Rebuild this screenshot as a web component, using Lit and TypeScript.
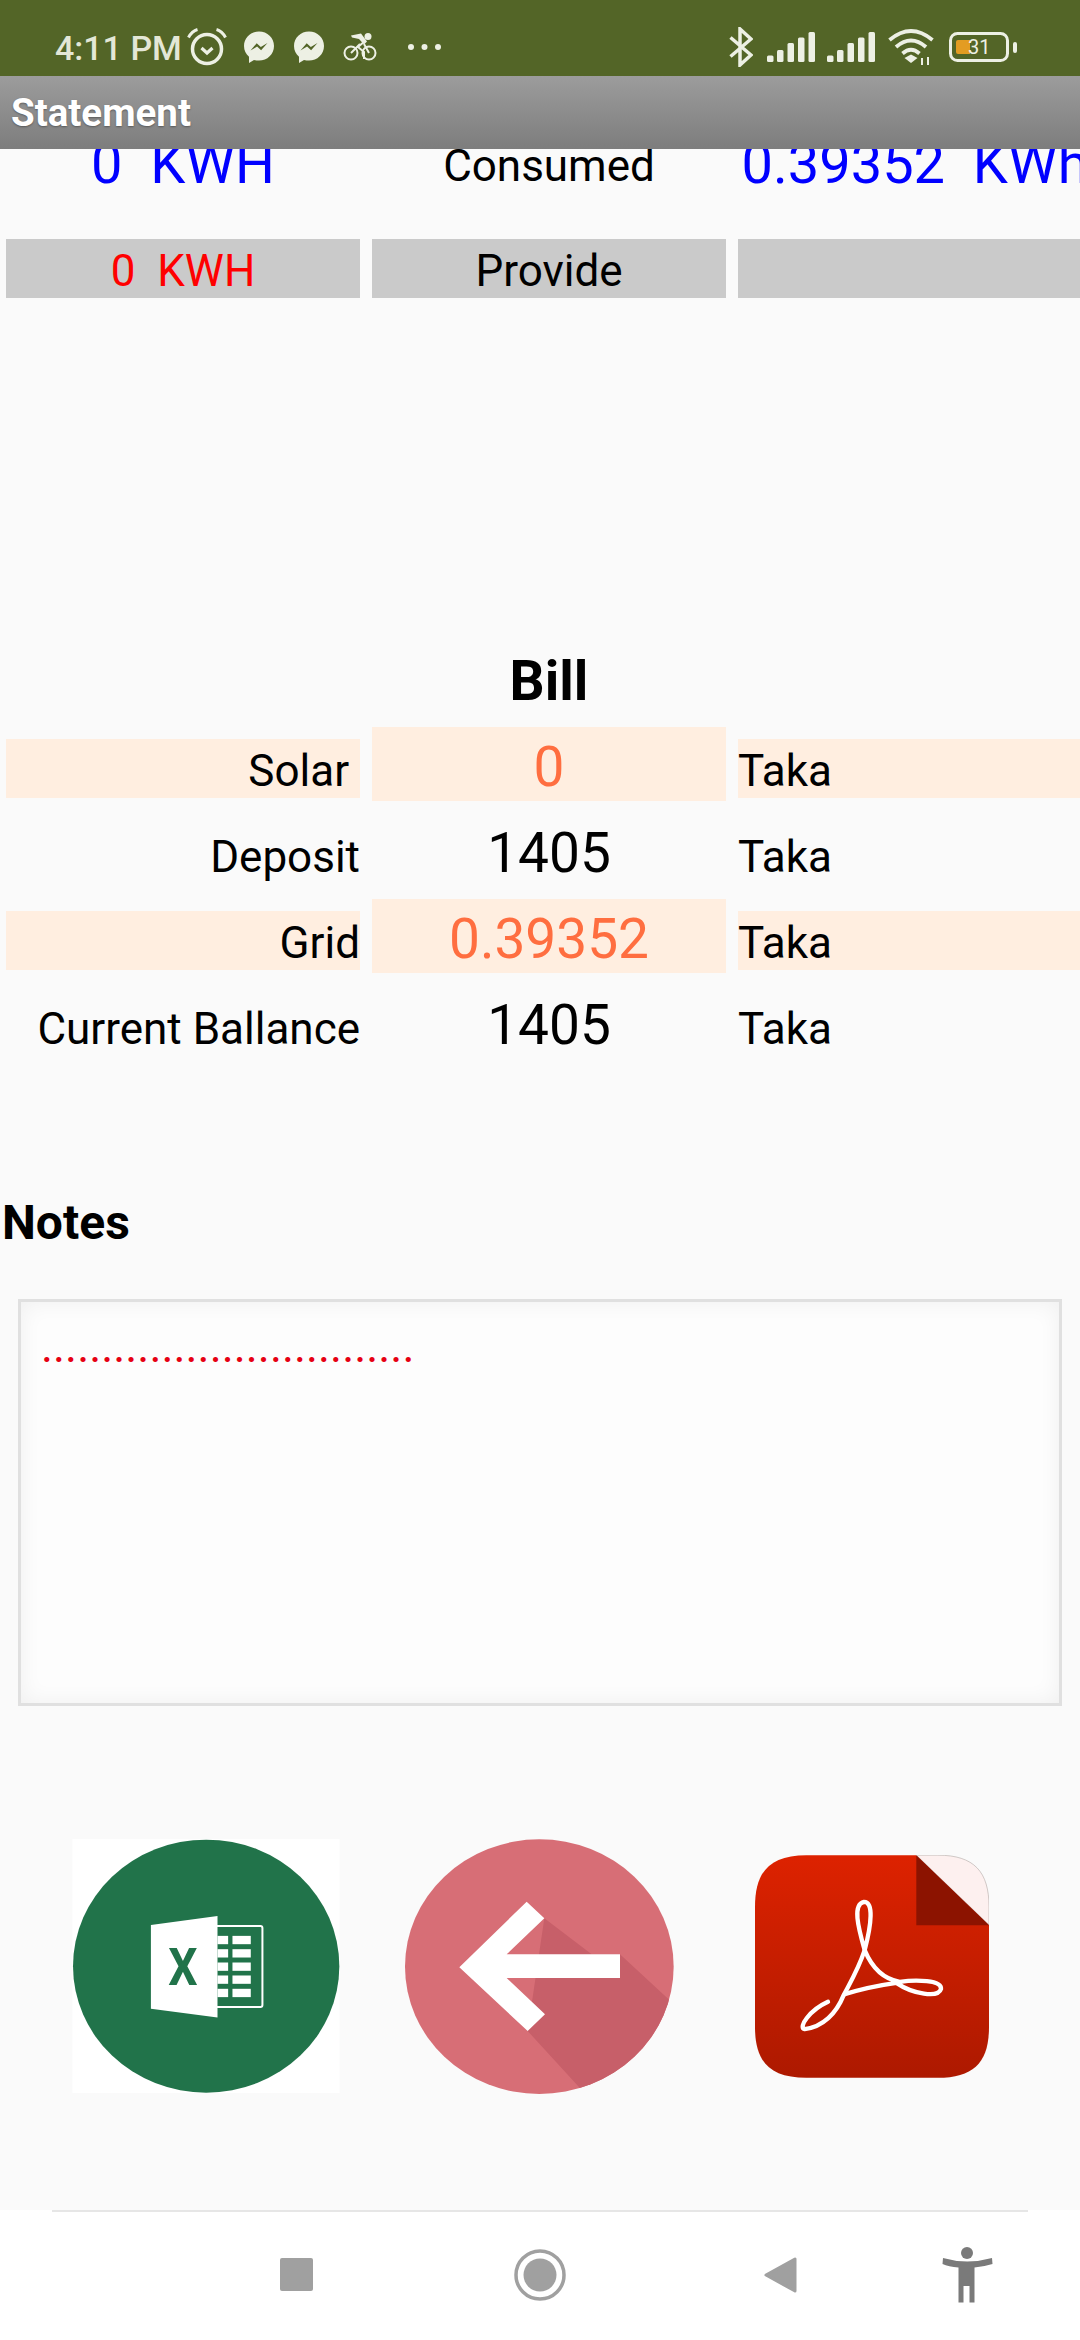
import { LitElement, css, html, svg } from "lit";
import { customElement } from "lit/decorators.js";

const signal = html`<svg class="signal" width="48" height="30" viewBox="0 0 48 30">
  <rect x="0" y="23.500" width="6.500" height="6.500" rx="1.500" />
  <rect x="10" y="18" width="6.500" height="12" rx="1.500" />
  <rect x="20.500" y="11" width="6.500" height="19" rx="1.500" />
  <rect x="31" y="5.500" width="6.500" height="24.500" rx="1.500" />
  <rect x="41.500" y="0" width="6.500" height="30" rx="1.500" />
</svg>`;

const messenger = html`<svg class="msg" width="32" height="32" viewBox="0 0 32 32">
  <path
    d="M16 .5C7.600.5 1 6.800 1 15c0 4.400 1.900 8.100 5 10.700V32l5-3.100c1.600.5 3.300.7 5 .7 8.400 0 15-6.400 15-14.600S24.400.5 16 .5z"
  />
  <path class="zig" d="M7.500 19.500l6.200-7.200 4.100 3.700 6.700-3.900-6.400 7.200-4-3.700z" />
</svg>`;

@customElement("app-root")
export class AppRoot extends LitElement {
  static styles = css`
    :host {
      display: flex;
      flex-direction: column;
      width: 1080px;
      height: 2340px;
      overflow: hidden;
      background: #fafafa;
      font-family: Roboto, "Liberation Sans", sans-serif;
      color: #000;
    }

    .status {
      flex: none;
      height: 76px;
      box-sizing: border-box;
      padding: 18px 0 0 55px;
      background: #536527;
      display: flex;
      align-items: center;
      color: #edf0e4;
    }
    .status svg {
      flex: none;
    }
    .dots,
    .signal,
    .msg {
      fill: #edf0e4;
    }
    .time {
      font-size: 34px;
      line-height: 42px;
      padding-top: 2px;
      font-weight: 500;
      width: 132px;
      white-space: nowrap;
      color: #e3e7d6;
    }
    .msg .zig {
      fill: #536527;
    }
    .alarm {
      margin-right: 16px;
    }
    .msg {
      margin-right: 18px;
    }
    .dots {
      margin-left: 30px;
    }
    .bt {
      margin-left: 288px;
    }
    .signal {
      margin-left: 14px;
    }
    .signal + .signal {
      margin-left: 12px;
    }
    .wifi {
      margin-left: 13px;
    }
    .batt {
      margin-left: 15px;
    }
    .batt text {
      font-family: Roboto, sans-serif;
      font-size: 20px;
    }

    .appbar {
      flex: none;
      height: 73px;
      background: linear-gradient(#9c9c9c, #7d7d7d);
      color: #fff;
      font-size: 38.500px;
      font-weight: 700;
      padding-left: 11px;
      line-height: 73px;
      text-shadow: 0 1px 2px rgba(0, 0, 0, 0.35);
      position: relative;
      z-index: 1;
    }

    .scroll {
      flex: 1;
      min-height: 0;
      overflow: hidden;
    }

    .grid {
      display: grid;
      grid-template-columns: 354px 354px 354px;
      column-gap: 12px;
      margin-left: 6px;
      white-space: pre;
    }
    .top {
      margin-top: -19px;
      height: 65px;
    }
    .provide {
      margin-top: 44px;
      height: 59px;
    }
    .c {
      text-align: center;
    }
    .blue {
      color: #0000ff;
      font-size: 56px;
      line-height: 69px;
    }
    .mid {
      font-size: 44px;
      line-height: 72px;
    }
    .grey {
      background: #cacaca;
      font-size: 44px;
      line-height: 65px;
      height: 59px;
    }
    .red {
      color: #ff0000;
    }

    .bill-title {
      margin-top: 350px;
      height: 65px;
      line-height: 67px;
      font-size: 55px;
      font-weight: 700;
      text-align: center;
      width: 1098px;
    }
    .bill {
      margin-top: 14px;
      grid-auto-rows: 74px;
      row-gap: 12px;
    }
    .lab,
    .unit {
      height: 59px;
      margin-top: 12px;
      font-size: 44px;
      line-height: 65px;
    }
    .lab {
      text-align: right;
    }
    .val {
      font-size: 55px;
      line-height: 80px;
      text-align: center;
      height: 74px;
    }
    .hi {
      background: #ffeee0;
    }
    .val.hi {
      color: #ff6e40;
    }

    .notes-title {
      margin: 135px 0 0 2px;
      font-size: 48px;
      font-weight: 700;
      height: 56px;
      line-height: 58px;
    }
    .notes {
      margin: 49px 0 0 18px;
      width: 1044px;
      height: 407px;
      box-sizing: border-box;
      border: 3px solid #e0e0e0;
      background: #fdfdfd;
      box-shadow: inset 0 0 22px rgba(0, 0, 0, 0.06);
      padding: 18px 0 0 20px;
      font-size: 45.700px;
      line-height: 54px;
      color: #e60012;
    }

    .actions {
      margin-top: 133px;
      display: flex;
      align-items: flex-start;
      padding-left: 72px;
    }
    .back {
      margin-left: 65px;
    }
    .pdf {
      margin: 16px 0 0 81px;
    }

    .nav {
      flex: none;
      height: 130px;
      background: #fff;
      position: relative;
      display: flex;
      box-sizing: border-box;
    }
    .rule {
      position: absolute;
      top: 0;
      left: 52px;
      right: 52px;
      height: 2px;
      background: #e6e6e6;
    }
    .nav svg {
      flex: none;
      height: 130px;
    }
    .n1 {
      margin-left: 270px;
    }
    .n2 {
      margin-left: 176px;
    }
    .n3 {
      margin-left: 191px;
    }
    .n4 {
      margin-left: 130px;
    }
  `;

  render() {
    return html`
      <div class="status">
        <span class="time">4:11 PM</span>
        <svg class="alarm" width="40" height="38" viewBox="0 0 40 38">
          <circle cx="20" cy="21" r="14.500" fill="none" stroke="#edf0e4" stroke-width="3.500" />
          <path d="M14.500 20l5.500 5 5.500-5" fill="none" stroke="#edf0e4" stroke-width="3.200" />
          <path
            d="M1.500 9.500Q5 3 10.500 1.500M38.500 9.500Q35 3 29.500 1.500"
            fill="none"
            stroke="#edf0e4"
            stroke-width="3"
          />
        </svg>
        ${messenger} ${messenger}
        <svg class="bike" width="34" height="30" viewBox="0 0 34 30">
          <g fill="none" stroke="#edf0e4" stroke-width="2">
            <circle cx="8" cy="21" r="6.500" />
            <circle cx="26" cy="21" r="6.500" />
            <path d="M22 9l-7 6 6 5v7M8 21l9-9M26 21l-5-9" />
          </g>
          <path d="M8 3.500L18 1.500l6 8-3 3-5-5.500-7-1.500z" fill="#edf0e4" />
          <circle cx="25" cy="4.500" r="3.500" fill="#edf0e4" />
        </svg>
        <svg class="dots" width="34" height="8" viewBox="0 0 34 8">
          <circle cx="4" cy="4" r="3" />
          <circle cx="17.500" cy="4" r="3" />
          <circle cx="31" cy="4" r="3" />
        </svg>
        <svg class="bt" width="24" height="40" viewBox="0 0 24 40" fill="none" stroke="#edf0e4" stroke-width="3.500">
          <path d="M1.500 10.500L22 28 11 38V2l11 10L1.500 29.500" />
        </svg>
        ${signal} ${signal}
        <svg class="wifi" width="46" height="36" viewBox="0 0 46 36" fill="none" stroke="#edf0e4" stroke-width="3.800">
          <path d="M1.500 11Q23-7 44.500 11M8 18Q23 5 38 18M14.500 24.500Q23 17 31.500 24.500" />
          <path d="M16.500 29l6.500-3.500 6.500 3.500-6.500 5z" fill="#edf0e4" stroke="none" />
          <path d="M34 36v-7M40 36v-8" stroke-width="2" />
        </svg>
        <svg class="batt" width="68" height="30" viewBox="0 0 68 30">
          <rect x="1.500" y="1.500" width="57" height="27" rx="7" fill="none" stroke="#edf0e4" stroke-width="3" />
          <path d="M9 8h12v14H9a2 2 0 0 1-2-2V10a2 2 0 0 1 2-2z" fill="#e39c22" />
          <text x="19" y="22" fill="#edf0e4">31</text>
          <rect x="64" y="10" width="4" height="11" rx="2" fill="#edf0e4" />
        </svg>
      </div>

      <div class="appbar">Statement</div>

      <div class="scroll">
        <div class="grid top">
          <div class="c blue">0  KWH</div>
          <div class="c mid">Consumed</div>
          <div class="c blue">0.39352  KWh</div>
        </div>
        <div class="grid provide">
          <div class="c grey red">0  KWH</div>
          <div class="c grey">Provide</div>
          <div class="grey"></div>
        </div>

        <div class="bill-title">Bill</div>
        <div class="grid bill">
          <div class="lab hi">Solar </div>
          <div class="val hi">0</div>
          <div class="unit hi">Taka</div>
          <div class="lab">Deposit</div>
          <div class="val">1405</div>
          <div class="unit">Taka</div>
          <div class="lab hi">Grid</div>
          <div class="val hi">0.39352</div>
          <div class="unit hi">Taka</div>
          <div class="lab">Current Ballance</div>
          <div class="val">1405</div>
          <div class="unit">Taka</div>
        </div>

        <div class="notes-title">Notes</div>
        <div class="notes">...............................</div>

        <div class="actions">
          ${this.excelIcon()} ${this.backIcon()} ${this.pdfIcon()}
        </div>
      </div>

      <div class="nav">
        <div class="rule"></div>
        <svg class="n1" width="60" viewBox="270 2210 60 130">
          <rect x="280" y="2258" width="33" height="33" rx="2" fill="#a0a0a0" />
        </svg>
        <svg class="n2" width="60" viewBox="506 2210 60 130">
          <circle cx="540" cy="2275" r="24" fill="none" stroke="#a0a0a0" stroke-width="3.500" />
          <circle cx="540" cy="2275" r="16.500" fill="#a0a0a0" />
        </svg>
        <svg class="n3" width="50" viewBox="757 2210 50 130">
          <path
            d="M795 2259v32l-29-16z"
            fill="#a0a0a0"
            stroke="#a0a0a0"
            stroke-width="3"
            stroke-linejoin="round"
          />
        </svg>
        <svg class="n4" width="60" viewBox="937 2210 60 130" fill="#7a7a7a">
          <circle cx="967" cy="2253" r="6" />
          <path d="M943 2258q24 7 49 0l.5 6q-8 2.500-18 3.500v35h-5v-16.500h-6v16.500h-5v-35q-10-1-16-3.500z" />
        </svg>
      </div>
    `;
  }

  excelIcon() {
    const rows = [378, 418, 458, 497, 537];
    return html`<svg class="excel" width="268" height="254" viewBox="97 87 803 763">
      <rect x="97" y="87" width="803" height="763" fill="#fff" />
      <ellipse cx="499" cy="469" rx="400" ry="380" fill="#21734a" />
      <path
        d="M530 348h132a6 6 0 0 1 6 6v232a6 6 0 0 1-6 6H530"
        fill="none"
        stroke="#fff"
        stroke-width="6"
      />
      ${rows.map(
        (y) => svg`
          <rect x="533" y=${y} width="32" height="25" fill="#fff" />
          <rect x="578" y=${y} width="55" height="25" fill="#fff" />
        `,
      )}
      <path d="M333 345L533 318V623L333 597z" fill="#fff" />
      <text
        x="385"
        y="526"
        textLength="88"
        lengthAdjust="spacingAndGlyphs"
        font-family="Roboto, sans-serif"
        font-weight="700"
        font-size="158"
        fill="#21734a"
      >X</text>
    </svg>`;
  }

  backIcon() {
    return html`<svg class="back" width="269" height="255" viewBox="75 87 807 765">
      <defs>
        <clipPath id="round"><ellipse cx="478" cy="470" rx="403" ry="382" /></clipPath>
      </defs>
      <ellipse cx="478" cy="470" rx="403" ry="382" fill="#d76e76" />
      <path
        clip-path="url(#round)"
        d="M493 325L635 433H720L890 590V900H660L443 663z"
        fill="#c75f69"
      />
      <path
        d="M238 472L440 275 493 325 380 433H720V504H380L495 613 443 663z"
        fill="#fff"
      />
    </svg>`;
  }

  pdfIcon() {
    return html`<svg class="pdf" width="234" height="223" viewBox="76 135 702 668">
      <defs>
        <linearGradient id="red" x1="0" y1="0" x2="0" y2="1">
          <stop offset="0" stop-color="#dd2200" />
          <stop offset="1" stop-color="#ad1900" />
        </linearGradient>
      </defs>
      <path
        d="M560 135H230C120 135 76 185 76 290V650C76 755 120 803 230 803H624C734 803 778 755 778 650V344z"
        fill="url(#red)"
      />
      <path d="M560 135H624C734 135 778 185 778 290V344z" fill="#fdf0ef" stroke="#b9b0ae" stroke-width="2" />
      <path d="M560 135V345H778z" fill="#8c1300" />
      <g fill="none" stroke="#fff" stroke-width="13" stroke-linecap="round">
        <path
          d="M405 420C385 350 368 282 403 275C432 275 426 340 405 420C430 480 468 508 510 515C560 508 636 510 634 536C626 564 550 552 500 518C450 525 400 535 345 552"
        />
        <path d="M405 420C385 480 360 520 342 555C320 610 280 650 225 657C204 652 240 600 295 575" />
      </g>
    </svg>`;
  }
}
